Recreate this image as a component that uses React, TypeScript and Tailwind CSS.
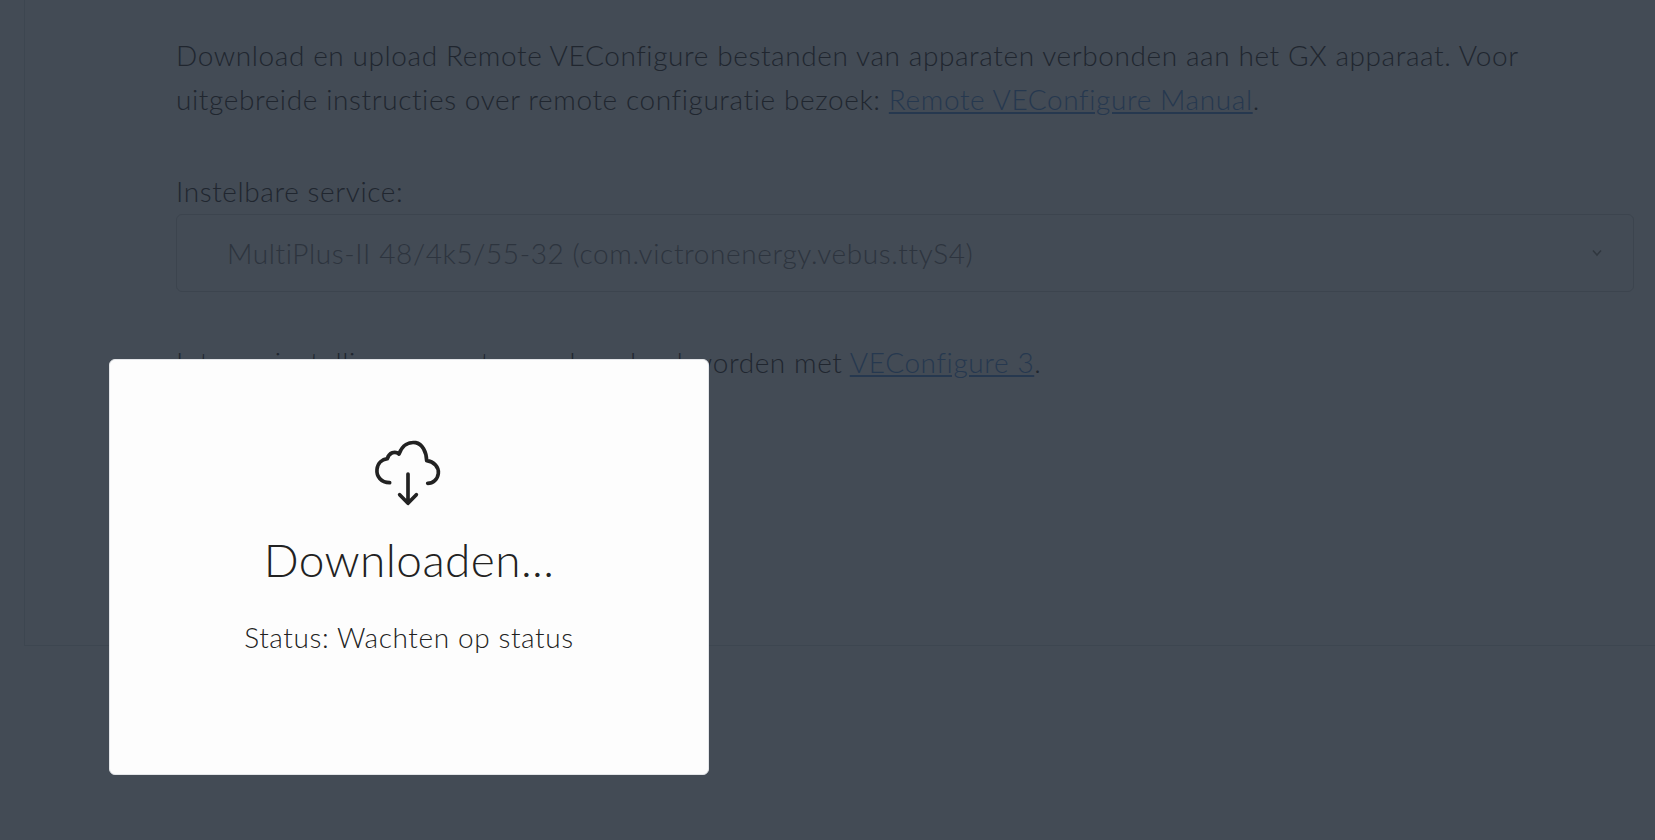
const font = "font-['Lato','Open_Sans',sans-serif]";

function CloudDownload() {
  return (
    <svg width="100" height="80" viewBox="0 0 300 240" fill="none" stroke="#222" strokeWidth="11" strokeLinecap="round" strokeLinejoin="round">
      <path d="M92 158C65 158 52 138 54 118C56 98 70 88 85 86C90 68 108 62 120 72C130 45 150 35 170 38C190 42 202 65 203 92C225 94 240 112 238 130C236 148 222 160 206 160" />
      <path d="M147 132V220M122 194L147 220L172 194" />
    </svg>
  );
}

export default function App() {
  return (
    <div className={`relative h-[840px] w-[1655px] overflow-hidden bg-[#434b55] pl-[24px] ${font} font-light tracking-[0.6px] text-[#20262f]`}>
      <div className="h-[646px] border-b border-l border-[#3d4650] pl-[151px] pt-[33px]">
        <p className="w-[1385px] text-[28px] leading-[44px]">
          Download en upload Remote VEConfigure bestanden van apparaten verbonden aan het GX apparaat. Voor uitgebreide instructies over remote configuratie bezoek:{" "}
          <a className="text-[#26384f] underline">Remote VEConfigure Manual</a>.
        </p>
        <label className="mt-[48px] block text-[28px] leading-[44px]">Instelbare service:</label>
        <div className="mt-px flex h-[78px] w-[1458px] items-center justify-between rounded-[6px] border border-[#3c444e] pl-[50px] pr-[30px] text-[28px] text-[#2d343e]">
          <span>MultiPlus-II 48/4k5/55-32 (com.victronenergy.vebus.ttyS4)</span>
          <svg width="12" height="8" viewBox="0 0 12 8" fill="none" stroke="#30373f" strokeWidth="1.5"><path d="M2 1.5L6 6L10 1.5" /></svg>
        </div>
        <p className="mt-[48px] text-[28px] leading-[44px]">
          Interne instellingen moeten gedownload worden met <a className="text-[#26384f] underline">VEConfigure 3</a>.
        </p>
      </div>
      <div className="absolute left-[109px] top-[359px] flex h-[416px] w-[600px] flex-col items-center rounded-[6px] border border-[#e3e5e8] bg-[#fdfdfd] pt-[70px] text-[#222]">
        <CloudDownload />
        <h2 className="mt-[23px] text-[46px] leading-[54px] tracking-[0.4px]">Downloaden...</h2>
        <p className="mt-[30px] text-[28px] leading-[40px]">Status: Wachten op status</p>
      </div>
    </div>
  );
}
